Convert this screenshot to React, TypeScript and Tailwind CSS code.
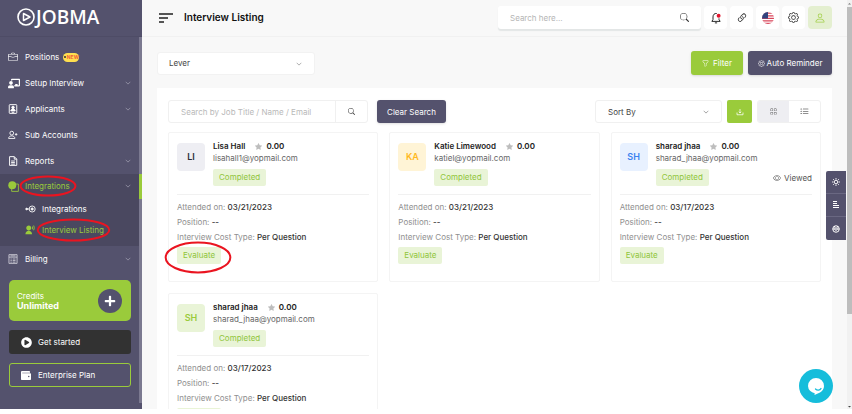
import type { ReactNode } from 'react';
import {
  BsBriefcase, BsChevronDown, BsEye, BsFunnel, BsGear, BsGrid, BsLink45Deg,
  BsListUl, BsPerson, BsSearch, BsStarFill,
} from 'react-icons/bs';
import { FaChalkboardTeacher, FaPlus, FaPlayCircle } from 'react-icons/fa';
import { RiUserVoiceFill } from 'react-icons/ri';

interface Interview {
  initials: string;
  avatar: string;
  name: string;
  email: string;
  date: string;
  viewed?: boolean;
  circled?: boolean;
}

const interviews: Interview[] = [
  { initials: 'LI', avatar: 'bg-[#eeeef3] text-[#2b2b33]', name: 'Lisa Hall', email: 'lisahall1@yopmail.com', date: '03/21/2023', circled: true },
  { initials: 'KA', avatar: 'bg-[#fff4d6] text-[#ffb81c]', name: 'Katie Limewood', email: 'katiel@yopmail.com', date: '03/21/2023' },
  { initials: 'SH', avatar: 'bg-[#e8f1ff] text-[#3b82f0]', name: 'sharad jhaa', email: 'sharad_jhaa@yopmail.com', date: '03/17/2023', viewed: true },
  { initials: 'SH', avatar: 'bg-[#e9f4d7] text-[#9acb3b]', name: 'sharad jhaa', email: 'sharad_jhaa@yopmail.com', date: '03/17/2023' },
];

function Circled({ className }: { className: string }) {
  return (
    <svg className={`pointer-events-none absolute z-10 overflow-visible ${className}`} viewBox="0 0 100 100" preserveAspectRatio="none" aria-hidden="true">
      <ellipse cx="50" cy="50" rx="49" ry="48" fill="none" stroke="#ea1420" strokeWidth="2" vectorEffect="non-scaling-stroke" />
    </svg>
  );
}

function ApplicantIcon() {
  return (
    <svg viewBox="0 0 16 16" className="h-[10px] w-[10px]" fill="none" stroke="currentColor" strokeWidth="1.5">
      <rect x="2" y="1" width="12" height="14" rx="1" />
      <circle cx="8" cy="5.5" r="2" fill="currentColor" />
      <path d="M4.5 11c0-4 7-4 7 0z" fill="currentColor" />
      <path d="M6 13.3h4" />
    </svg>
  );
}

function SubAccountIcon() {
  return (
    <svg viewBox="0 0 16 16" className="h-[10px] w-[10px]" fill="none" stroke="currentColor" strokeWidth="1.4">
      <circle cx="6" cy="5" r="3" />
      <path d="M1 13.5c0-5.5 10-5.5 10 0zM11 7h4M13 5v4" />
    </svg>
  );
}

function ReportIcon() {
  return (
    <svg viewBox="0 0 16 16" className="h-[10px] w-[10px]" fill="none" stroke="currentColor" strokeWidth="1.5">
      <path d="M2.5 1h7.5l4 4v10H2.5zM10 1v4h4M5 8h6M5 10.5h6M5 13h6" />
    </svg>
  );
}

function IntegrationIcon() {
  return (
    <svg viewBox="0 0 18 18" className="h-[11px] w-[11px]">
      <path d="M12.500 5H17v12H6v-4" fill="none" stroke="#9acb3b" strokeWidth="1.400" />
      <circle cx="7" cy="7" r="6.5" fill="#9acb3b" />
    </svg>
  );
}

function BillingIcon() {
  return (
    <svg viewBox="0 0 16 16" className="h-[10px] w-[10px]" fill="none" stroke="#d5d4de" strokeWidth="1.300">
      <path d="M1.500 1h13v14h-13zM1.500 5h13M4 3h8M4 8h2M7.500 8h4.500M4 10.500h2M7.500 10.500h4.500M4 13h2M7.500 13h4.500" />
    </svg>
  );
}

function ConnectIcon() {
  return (
    <svg viewBox="0 0 20 14" className="h-[8px] w-[11px]" fill="none" stroke="currentColor" strokeWidth="1.6">
      <circle cx="13" cy="7" r="5.5" />
      <circle cx="13" cy="7" r="2" fill="currentColor" />
      <path d="M1 7h7" />
      <circle cx="3" cy="7" r="1.5" fill="currentColor" />
    </svg>
  );
}

function WalletIcon() {
  return (
    <svg viewBox="0 0 20 18" className="h-[9px] w-[10px]">
      <path d="M0 2.500C0 1 1 0 2.500 0H16c1.200 0 2 .8 2 2v1.500H2.500v1H18c1.200 0 2 .8 2 2V16c0 1.200-.8 2-2 2H2c-1.200 0-2-.8-2-2z" fill="#fff" />
      <circle cx="15.500" cy="11" r="1.500" fill="#54526d" />
    </svg>
  );
}

function BellIcon() {
  return (
    <svg viewBox="0 0 16 16" className="h-3 w-3" fill="none" stroke="#222" strokeWidth="1.3">
      <path d="M9 2C6 1.500 4 3.500 4 6.500v3.500L2.500 12.500h11L12 10V8.500M6.500 14.500h3" />
      <circle cx="11.500" cy="5" r="2.600" fill="#e3122b" stroke="none" />
    </svg>
  );
}

function FlagIcon() {
  return (
    <svg viewBox="0 0 24 24" className="h-3 w-3">
      <clipPath id="flag"><circle cx="12" cy="12" r="12" /></clipPath>
      <g clipPath="url(#flag)">
        <rect width="24" height="24" fill="#fff" />
        <path d="M0 2h24M0 7.500h24M0 12.500h24M0 17.500h24M0 22.500h24" stroke="#d9455a" strokeWidth="2.500" />
        <rect width="12" height="13" fill="#31437e" />
      </g>
    </svg>
  );
}

function DownloadIcon() {
  return (
    <svg viewBox="0 0 16 16" className="h-2 w-2" fill="none" stroke="#fff" strokeWidth="1.500">
      <path d="M8 2v8M5.500 7.500 8 10l2.500-2.500M2 9v4.500h12V9" />
    </svg>
  );
}

function NavItem({ icon, label, chevron, badge }: { icon: ReactNode; label: string; chevron?: boolean; badge?: ReactNode }) {
  return (
    <a href="#" className="flex h-[26px] items-center pr-2 pl-2 text-white">
      <span className="flex w-[17px] items-center">{icon}</span>
      {label}
      {badge}
      {chevron && <BsChevronDown className="ml-auto h-[6px] w-[6px] text-[#b5b4c4]" />}
    </a>
  );
}

function NewBadge() {
  return (
    <span className="ml-1 flex h-[9px] w-4 items-center justify-center gap-px rounded-full bg-[#ffdf4f] text-[5px] leading-none font-bold text-[#f0603a]">
      <i className="h-[2px] w-[2px] rounded-full bg-[#333]" />
      NEW
    </span>
  );
}

function Sidebar() {
  return (
    <aside className="flex w-[142px] shrink-0 flex-col bg-[#54526d] text-[8px]">
      <div className="flex h-[37px] shrink-0 items-center gap-px border-b border-[#4e4c66] pb-[2px] pl-[17px] text-white">
        <svg viewBox="0 0 18 18" className="h-[18px] w-[18px]" fill="none" stroke="currentColor">
          <circle cx="9" cy="9" r="8" strokeWidth="1.600" />
          <path d="M6.500 5.500v7L13 9z" strokeWidth="1.500" strokeLinejoin="round" />
        </svg>
        <span className="font-['Open_Sans',sans-serif] text-[19px] leading-none font-semibold">JOBMA</span>
      </div>
      <div className="flex min-h-0 flex-1">
        <nav className="min-w-0 flex-1 overflow-hidden pt-[7px]">
          <NavItem icon={<BsBriefcase className="h-[10px] w-[10px]" />} label="Positions" badge={<NewBadge />} />
          <NavItem icon={<FaChalkboardTeacher className="h-[11px] w-[12px]" />} label="Setup Interview" chevron />
          <NavItem icon={<ApplicantIcon />} label="Applicants" chevron />
          <NavItem icon={<SubAccountIcon />} label="Sub Accounts" />
          <NavItem icon={<ReportIcon />} label="Reports" chevron />

          <div className="bg-[#4a4860] pb-[6px]">
            <a href="#" className="flex h-6 items-center pr-2 pl-2 text-[#9acb3b]">
              <span className="flex w-[17px] items-center"><IntegrationIcon /></span>
              <span className="relative">
                Integrations
                <Circled className="-top-1 -left-[5px] h-5 w-14" />
              </span>
              <BsChevronDown className="ml-auto h-[6px] w-[6px] text-[#b5b4c4]" />
            </a>
            <a href="#" className="flex h-[21px] items-center pl-[25px] text-white">
              <span className="flex w-[17px] items-center"><ConnectIcon /></span>
              Integrations
            </a>
            <a href="#" className="flex h-[21px] items-center pl-[25px] text-[#9acb3b]">
              <span className="flex w-[17px] items-center"><RiUserVoiceFill className="h-[10px] w-[10px]" /></span>
              <span className="relative">
                Interview Listing
                <Circled className="-top-[5px] -left-[5px] h-[22px] w-[73px]" />
              </span>
            </a>
          </div>
          <NavItem icon={<BillingIcon />} label="Billing" chevron />

          <div className="mt-2 mr-2 ml-[9px] flex flex-col gap-[9px] text-white">
            <div className="flex h-[41px] items-center justify-between rounded-[5px] bg-[#9acb3b] pr-[9px] pl-2">
              <div className="leading-[10px]">
                <p>Credits</p>
                <p className="text-[9px] font-bold">Unlimited</p>
              </div>
              <button aria-label="Add credits" className="flex h-6 w-6 items-center justify-center rounded-full bg-[#54526d]">
                <FaPlus className="h-3 w-3" />
              </button>
            </div>
            <button className="flex h-6 items-center gap-[6px] rounded-[3px] bg-[#323232] pl-3">
              <FaPlayCircle className="h-[11px] w-[11px]" /> Get started
            </button>
            <button className="flex h-6 items-center gap-[7px] rounded-[3px] border border-[#9acb3b] pl-[11px]">
              <WalletIcon /> Enterprise Plan
            </button>
          </div>
        </nav>
        <div className="mb-[6px] w-[3px] bg-[#7b7990]">
          <div className="mt-[137px] h-[25px] bg-[#9acb3b]" />
        </div>
      </div>
    </aside>
  );
}

function Header() {
  const square = 'flex h-[23px] w-[23px] items-center justify-center rounded-[4px] bg-white text-[#222]';
  return (
    <header className="flex h-[37px] shrink-0 items-center border-b border-[#f1f1f1] pr-[15px] pb-px pl-[17px]">
      <button aria-label="Toggle menu" className="flex flex-col gap-[2px]">
        <i className="h-[2px] w-[14px] bg-[#555]" />
        <i className="h-[2px] w-[9px] bg-[#555]" />
        <i className="h-[2px] w-[5px] bg-[#555]" />
      </button>
      <h1 className="ml-[11px] text-[10px] font-semibold text-[#111]">Interview Listing</h1>
      <div className="ml-auto flex h-[23px] w-[203px] items-center rounded-[3px] bg-white px-3 shadow-[0_2px_1px_#e3e6e6]">
        <input aria-label="Search" placeholder="Search here..." className="min-w-0 flex-1 text-[8px] outline-none placeholder:text-[#b5b5b5]" />
        <BsSearch className="h-[9px] w-[9px] text-[#333]" />
      </div>
      <div className="ml-[3px] flex gap-[3px]">
        <button aria-label="Notifications" className={square}><BellIcon /></button>
        <button aria-label="Links" className={square}><BsLink45Deg className="h-3 w-3" /></button>
        <button aria-label="Language" className={square}><FlagIcon /></button>
        <button aria-label="Settings" className={square}><BsGear className="h-[11px] w-[11px]" /></button>
        <button aria-label="Profile" className="flex h-[23px] w-6 items-center justify-center rounded-[4px] bg-[#e4efd0] text-[#a4d04c]">
          <BsPerson className="h-3 w-3" />
        </button>
      </div>
    </header>
  );
}

function InterviewCard({ item }: { item: Interview }) {
  return (
    <article className="h-[150px] min-w-0 rounded-[2px] border border-[#f4f4f4] px-2 pt-[10px] text-[8px]">
      <div className="flex gap-2">
        <div className={`flex h-7 w-7 shrink-0 items-center justify-center rounded-[4px] text-[9px] font-semibold ${item.avatar}`}>
          {item.initials}
        </div>
        <div className="min-w-0 flex-1">
          <div className="-mt-[3px] flex h-3 items-center font-semibold text-[#222]">
            {item.name}
            <BsStarFill className="mr-1 ml-[10px] h-[7px] w-[7px] text-[#bdbdbd]" />
            0.00
          </div>
          <p className="leading-3 text-[#666]">{item.email}</p>
          <div className="mt-[5px] flex items-center justify-between">
            <span className="rounded-[2px] bg-[#e9f4d7] px-[6px] leading-[17px] text-[#8fc53a]">Completed</span>
            {item.viewed && (
              <span className="flex items-center gap-[3px] text-[#555]"><BsEye className="h-2 w-2" /> Viewed</span>
            )}
          </div>
        </div>
      </div>
      <div className="mt-2 border-t border-[#f1f1f1] pt-[5px] leading-[15px] text-[#8f8f8f]">
        <p>Attended on: <span className="font-medium text-[#333]">{item.date}</span></p>
        <p>Position: <span className="font-medium text-[#333]">--</span></p>
        <p>Interview Cost Type: <span className="font-medium text-[#333]">Per Question</span></p>
      </div>
      <div className="mt-[2px] flex">
        <div className="relative">
          <button className="block rounded-[2px] bg-[#e9f4d7] px-[6px] leading-[17px] text-[#8fc53a]">Evaluate</button>
          {item.circled && <Circled className="-top-[5px] -left-3 h-[31px] w-[66px]" />}
        </div>
      </div>
    </article>
  );
}

function Toolbar() {
  return (
    <div className="flex h-[23px] items-center text-[8px]">
      <div className="flex h-full w-[200px] rounded-[3px] border border-[#f0f0f0]">
        <input aria-label="Search interviews" placeholder="Search by Job Title / Name / Email" className="min-w-0 flex-1 pl-3 outline-none placeholder:text-[#b9b9b9]" />
        <button aria-label="Search" className="flex w-8 items-center justify-center border-l border-[#f0f0f0]">
          <BsSearch className="h-[7px] w-[7px] text-[#444]" />
        </button>
      </div>
      <button className="ml-[9px] h-full w-[69px] rounded-[3px] bg-[#54526d] text-white shadow-sm">Clear Search</button>
      <div className="relative ml-auto h-full w-[127px]">
        <select aria-label="Sort by" className="h-full w-full appearance-none rounded-[3px] border border-[#f0f0f0] bg-white pl-3 text-[#444]">
          <option>Sort By</option>
        </select>
        <BsChevronDown className="pointer-events-none absolute top-[9px] right-[13px] h-[6px] w-[6px] text-[#666]" />
      </div>
      <button aria-label="Download" className="ml-[5px] flex h-full w-[25px] items-center justify-center rounded-[2px] bg-[#9acb3b]">
        <DownloadIcon />
      </button>
      <div className="ml-[5px] flex h-full w-16 overflow-hidden rounded-[3px] border border-[#f0f0f0]">
        <button aria-label="Grid view" className="flex flex-1 items-center justify-center bg-[#eeeef2]"><BsGrid className="h-[7px] w-[7px] text-[#555]" /></button>
        <button aria-label="List view" className="flex flex-1 items-center justify-center"><BsListUl className="h-[9px] w-[9px] text-[#222]" /></button>
      </div>
    </div>
  );
}

function SideTools() {
  const tool = 'flex h-[23px] w-5 items-center justify-center text-white';
  return (
    <div className="absolute top-[171px] right-[6px] z-20 divide-y divide-[#6a6882] rounded-l-[2px] bg-[#54526d]">
      <button aria-label="Theme" className={tool}>
        <svg viewBox="0 0 16 16" className="h-2 w-2" fill="none" stroke="currentColor" strokeWidth="1.800">
          <circle cx="8" cy="8" r="3.500" />
          <path d="M8 0v3M8 13v3M0 8h3M13 8h3M2.300 2.300l2 2M11.700 11.700l2 2M2.300 13.700l2-2M11.700 4.300l2-2" />
        </svg>
      </button>
      <button aria-label="Alignment" className={tool}>
        <svg viewBox="0 0 8 8" className="h-2 w-2" fill="none" stroke="currentColor" strokeWidth="1">
          <path d="M1 .5h4M1 2.500h4M1 4.500h6M1 6.500h6" />
        </svg>
      </button>
      <button aria-label="Help" className={tool}>
        <svg viewBox="0 0 16 16" className="h-2 w-2" fill="none" stroke="currentColor" strokeWidth="2">
          <circle cx="8" cy="8" r="6.500" />
          <circle cx="8" cy="8" r="2.500" />
          <path d="M1.500 8h4M10.500 8h4M5 2v3M11 2v3" />
        </svg>
      </button>
    </div>
  );
}

function ScrollTrack() {
  return (
    <div className="flex w-[5px] shrink-0 flex-col items-center bg-[#f1f1f1]" aria-hidden="true">
      <svg viewBox="0 0 5 5" className="h-[7px] w-[5px]"><path d="M1 3.500h3L2.500 2z" fill="#777" /></svg>
      <div className="h-3/4 w-full bg-[#bdbdbd]" />
      <svg viewBox="0 0 5 5" className="mt-auto h-[5px] w-[5px]"><path d="M1 2h3L2.500 3.500z" fill="#444" /></svg>
    </div>
  );
}

export default function App() {
  return (
    <div className="h-screen bg-white pb-[5px] font-[Inter,sans-serif]">
      <div className="relative flex h-full overflow-hidden bg-[#f8f8f8]">
        <Sidebar />
        <main className="flex min-w-0 flex-1 flex-col">
          <Header />
          <div className="flex min-h-0 flex-1 flex-col px-[15px] pt-[14px]">
            <div className="flex h-6 shrink-0 items-center text-[8px]">
              <div className="relative h-[23px] w-[158px]">
                <select aria-label="Integration" className="h-full w-full appearance-none rounded-[3px] border border-[#f2f2f2] bg-white pl-[11px] text-[#444]">
                  <option>Lever</option>
                </select>
                <BsChevronDown className="pointer-events-none absolute top-[9px] right-[13px] h-[6px] w-[6px] text-[#777]" />
              </div>
              <button className="ml-auto flex h-6 w-[52px] items-center justify-center gap-1 rounded-[3px] bg-[#9acb3b] text-white shadow-sm">
                <BsFunnel className="h-[7px] w-[7px]" /> Filter
              </button>
              <button className="ml-[5px] flex h-6 w-[84px] items-center justify-center gap-[2px] rounded-[3px] bg-[#54526d] text-white shadow-sm">
                <BsGear className="h-[7px] w-[7px]" /> Auto Reminder
              </button>
            </div>
            <section className="mt-[13px] min-h-0 flex-1 overflow-hidden bg-white px-[11px] pt-3">
              <Toolbar />
              <div className="mt-[9px] grid grid-cols-3 gap-[11px]">
                {interviews.map((item, i) => <InterviewCard key={i} item={item} />)}
              </div>
            </section>
          </div>
        </main>
        <ScrollTrack />
        <SideTools />
        <button aria-label="Open chat" className="absolute right-[19px] bottom-[6px] z-20 flex h-[34px] w-[34px] items-center justify-center rounded-full bg-[#16bddb]">
          <svg viewBox="0 0 18 18" className="h-[18px] w-[18px]">
            <path d="M9 1a8 8 0 0 1 8 8c0 3-1.500 5-4 6.500L7.500 18l.2-1.800A7.600 7.600 0 0 1 1 9a8 8 0 0 1 8-8z" fill="#fff" />
            <path d="M8.500 12c1.500 1.500 4.500 1.500 5.500-.5" fill="none" stroke="#16bddb" strokeWidth="1.300" strokeLinecap="round" />
          </svg>
        </button>
      </div>
    </div>
  );
}
